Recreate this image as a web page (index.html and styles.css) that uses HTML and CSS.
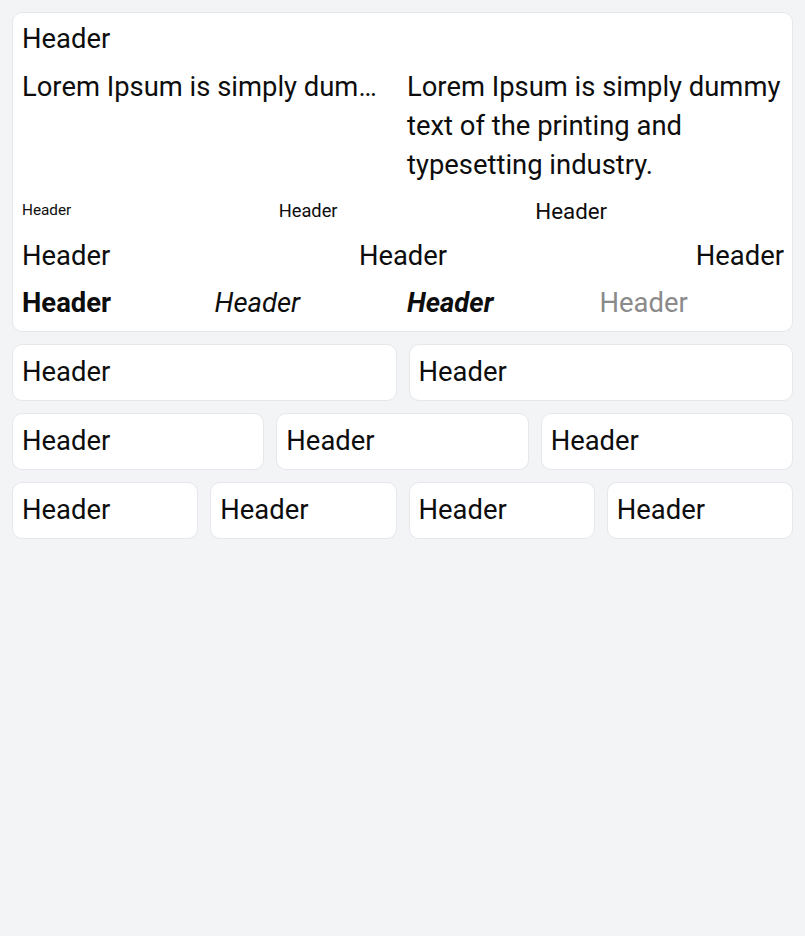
FILE: index.html
```html
<!DOCTYPE html>
<html>
<head>
<meta charset="utf-8">
<link rel="stylesheet" href="styles.css">
</head>
<body>
<div class="page">
  <div class="card main">
    <div class="title">Header</div>
    <div class="cols2">
      <div class="lorem trunc">Lorem Ipsum is simply dummy text of the printing and typesetting industry.</div>
      <div class="lorem">Lorem Ipsum is simply dummy text of the printing and typesetting industry.</div>
    </div>
    <div class="cols3 sizes">
      <div class="s1">Header</div>
      <div class="s2">Header</div>
      <div class="s3">Header</div>
    </div>
    <div class="cols3 aligns">
      <div class="left">Header</div>
      <div class="center">Header</div>
      <div class="right">Header</div>
    </div>
    <div class="cols4 styles">
      <div class="bold">Header</div>
      <div class="italic">Header</div>
      <div class="bold italic">Header</div>
      <div class="muted">Header</div>
    </div>
  </div>
  <div class="row r2">
    <div class="card small">Header</div>
    <div class="card small">Header</div>
  </div>
  <div class="row r3">
    <div class="card small">Header</div>
    <div class="card small">Header</div>
    <div class="card small">Header</div>
  </div>
  <div class="row r4">
    <div class="card small">Header</div>
    <div class="card small">Header</div>
    <div class="card small">Header</div>
    <div class="card small">Header</div>
  </div>
</div>
</body>
</html>
```
FILE: styles.css
```css
html, body {
  margin: 0;
  padding: 0;
  background: #f3f4f6;
}
body {
  font-family: Roboto, "Liberation Sans", sans-serif;
  color: #0d0d0d;
  font-size: 27.4px;
  line-height: 39px;
}
.page {
  padding: 12px;
  display: flex;
  flex-direction: column;
  gap: 12px;
}
.card {
  background: #ffffff;
  border: 1px solid #e5e7eb;
  border-radius: 10px;
  padding: 8px 8px 8px 9px;
}
.main {
  display: flex;
  flex-direction: column;
  padding-bottom: 8px;
}
.title {
  line-height: 37px;
  margin-bottom: 10px;
}
.cols2 {
  display: grid;
  grid-template-columns: 1fr 1fr;
  gap: 8px;
}
.trunc {
  white-space: nowrap;
  overflow: hidden;
  text-overflow: ellipsis;
}
.cols3 {
  display: grid;
  grid-template-columns: 1fr 1fr 1fr;
  gap: 8px;
}
.cols4 {
  display: grid;
  grid-template-columns: 1fr 1fr 1fr 1fr;
  gap: 8px;
}
.sizes {
  margin-top: 8px;
  height: 36px;
  align-items: center;
}
.s1 { font-size: 15.3px; line-height: 22px; margin-top: -3px; }
.s2 { font-size: 18.3px; line-height: 27px; margin-top: -2px; }
.s3 { font-size: 22.3px; line-height: 32px; }
.aligns { margin-top: 8px; }
.left { text-align: left; }
.center { text-align: center; }
.right { text-align: right; }
.styles { margin-top: 8px; }
.bold { font-weight: 700; }
.italic { font-style: italic; }
.muted { color: #8a8a8a; }
.row {
  display: grid;
  gap: 12px;
}
.r2 { grid-template-columns: repeat(2, 1fr); }
.r3 { grid-template-columns: repeat(3, 1fr); }
.r4 { grid-template-columns: repeat(4, 1fr); }
```
